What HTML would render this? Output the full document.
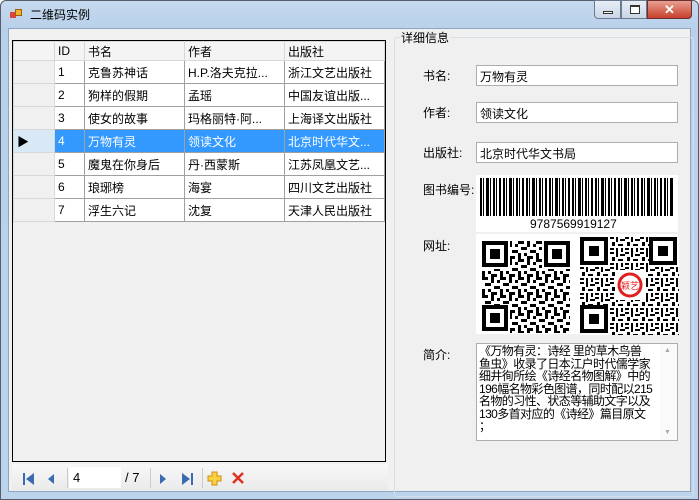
<!DOCTYPE html>
<html><head><meta charset="utf-8"><style>
*{margin:0;padding:0;box-sizing:border-box}
body{width:699px;height:500px;overflow:hidden;font-family:"Liberation Sans","Noto Sans CJK SC",sans-serif;font-size:12px;background:#fff;position:relative}
.abs{position:absolute}
.frame{left:0;top:0;width:699px;height:500px;background:linear-gradient(#c5d9ee,#b8d0ea 30px,#bcd3ec);border:1px solid #555e6a;border-radius:6px 6px 0 0}
.client{left:8px;top:28px;width:683px;height:464px;background:#f0f0f0;border:1px solid #8fa5bf}
.grid{left:12px;top:40px;width:374px;height:422px;background:#f0f0f0;border:1px solid #000}
table{border-collapse:collapse;position:absolute;left:0;top:0;font-size:12px}
td{border:1px solid #a0a0a0;height:23px;padding:0 0 0 3px;background:#fff;white-space:nowrap;overflow:hidden}
tr.h td{background:#f4f4f4;border-color:#d8d8d8;height:19px}
td.rh{background:#f0f0f0;border-color:#d8d8d8;width:41px}
tr.sel td{background:#3399ff;color:#fff}
tr.sel td.rh{background:#d8e8f6;color:#000}
.lbl{font-size:12px}
.tb{background:#fff;border:1px solid #abadb3;height:21px;padding:2px 3px;font-size:12px;width:202px;left:476px}
</style></head><body>
<div class="abs frame"></div>
<div class="abs" style="left:10px;top:8px;width:12px;height:12px">
<div class="abs" style="left:0;top:4px;width:6px;height:6px;background:#d44"></div>
<div class="abs" style="left:5px;top:1px;width:7px;height:7px;background:#f0b030;border:1px solid #a06000"></div></div>
<div class="abs" style="left:30px;top:6px;font-size:12px">二维码实例</div>
<div class="abs" style="left:594px;top:0;width:27px;height:19px;border:1px solid #6a7a90;border-radius:0 0 0 4px;background:linear-gradient(#e8eef6,#c9d6e6)"><div class="abs" style="left:8px;top:10px;width:10px;height:3px;border:1px solid #333;background:#fff"></div></div>
<div class="abs" style="left:621px;top:0;width:26px;height:19px;border:1px solid #6a7a90;background:linear-gradient(#e8eef6,#c9d6e6)"><div class="abs" style="left:8px;top:4px;width:10px;height:9px;border:1px solid #333;border-top-width:2px;background:#fff"></div></div>
<div class="abs" style="left:647px;top:0;width:45px;height:19px;border:1px solid #6a3030;border-radius:0 0 4px 0;background:linear-gradient(#e8a090,#c8402c);color:#fff;font-weight:bold;text-align:center;font-size:13px;line-height:18px">✕</div>
<div class="abs client"></div>
<div class="abs grid">
<table>
<tr class="h"><td class="rh"></td><td style="width:30px">ID</td><td style="width:100px">书名</td><td style="width:100px">作者</td><td style="width:100px">出版社</td></tr>
<tr><td class="rh"></td><td>1</td><td>克鲁苏神话</td><td>H.P.洛夫克拉...</td><td>浙江文艺出版社</td></tr>
<tr><td class="rh"></td><td>2</td><td>狗样的假期</td><td>孟瑶</td><td>中国友谊出版...</td></tr>
<tr><td class="rh"></td><td>3</td><td>使女的故事</td><td>玛格丽特·阿...</td><td>上海译文出版社</td></tr>
<tr class="sel"><td class="rh">▶</td><td>4</td><td>万物有灵</td><td>领读文化</td><td>北京时代华文...</td></tr>
<tr><td class="rh"></td><td>5</td><td>魔鬼在你身后</td><td>丹·西蒙斯</td><td>江苏凤凰文艺...</td></tr>
<tr><td class="rh"></td><td>6</td><td>琅琊榜</td><td>海宴</td><td>四川文艺出版社</td></tr>
<tr><td class="rh"></td><td>7</td><td>浮生六记</td><td>沈复</td><td>天津人民出版社</td></tr>
</table></div>
<div class="abs" style="left:12px;top:464px;width:376px;height:26px;background:linear-gradient(#f8f8f8,#eaeaea)"></div>
<svg class="abs" style="left:22px;top:472px" width="14" height="14"><rect x="1" y="1" width="2" height="12" fill="#3a6ab0"/><path d="M12 1 L4 7 L12 13Z" fill="#3a6ab0"/></svg>
<svg class="abs" style="left:46px;top:472px" width="10" height="14"><path d="M8 2 L2 7 L8 12Z" fill="#3a6ab0"/></svg>
<div class="abs" style="left:67px;top:468px;width:1px;height:20px;background:#ccc"></div>
<div class="abs" style="left:69px;top:467px;width:52px;height:21px;background:#fff;font-size:13px;padding:3px 4px">4</div>
<div class="abs" style="left:125px;top:470px;font-size:13px">/ 7</div>
<div class="abs" style="left:150px;top:468px;width:1px;height:20px;background:#ccc"></div>
<svg class="abs" style="left:158px;top:472px" width="10" height="14"><path d="M2 2 L8 7 L2 12Z" fill="#3a6ab0"/></svg>
<svg class="abs" style="left:180px;top:472px" width="14" height="14"><path d="M2 1 L10 7 L2 13Z" fill="#3a6ab0"/><rect x="11" y="1" width="2" height="12" fill="#3a6ab0"/></svg>
<div class="abs" style="left:202px;top:468px;width:1px;height:20px;background:#ccc"></div>
<svg class="abs" style="left:207px;top:471px" width="15" height="15"><path d="M5 1h5v4h4v5h-4v4h-5v-4h-4v-5h4z" fill="#f8d040" stroke="#d09010"/></svg>
<svg class="abs" style="left:231px;top:471px" width="14" height="14"><path d="M2 2L12 12M12 2L2 12" stroke="#e03020" stroke-width="2.5"/></svg>
<!-- group box -->
<div class="abs" style="left:394px;top:37px;width:300px;height:460px;border:1px solid #d5dfe5;border-radius:3px"></div>
<div class="abs" style="left:400px;top:29px;background:#f0f0f0;padding:0 1px">详细信息</div>
<div class="abs lbl" style="left:423px;top:67px">书名:</div>
<div class="abs tb" style="top:65px">万物有灵</div>
<div class="abs lbl" style="left:423px;top:104px">作者:</div>
<div class="abs tb" style="top:102px">领读文化</div>
<div class="abs lbl" style="left:423px;top:144px">出版社:</div>
<div class="abs tb" style="top:142px">北京时代华文书局</div>
<div class="abs lbl" style="left:423px;top:181px">图书编号:</div>
<div class="abs" style="left:476px;top:175px;width:202px;height:57px;background:#fff"></div>
<svg class="abs" style="left:480px;top:178px" width="196" height="38">
<defs><pattern id="bc" width="23" height="38" patternUnits="userSpaceOnUse">
<rect x="0" width="2" height="38"/><rect x="3" width="1" height="38"/><rect x="6" width="3" height="38"/><rect x="10" width="1" height="38"/><rect x="13" width="2" height="38"/><rect x="16" width="1" height="38"/><rect x="19" width="2" height="38"/></pattern></defs>
<rect width="193" height="38" fill="url(#bc)"/></svg>
<div class="abs" style="left:530px;top:217px;font-size:12px">9787569919127</div>
<div class="abs lbl" style="left:423px;top:237px">网址:</div>
<div class="abs" style="left:476px;top:234px;width:202px;height:100px;background:#fff"></div>
<svg class="abs" style="left:482px;top:241px" width="88" height="92">
<defs><pattern id="q1" width="18" height="18" patternUnits="userSpaceOnUse">
<rect x="0" y="0" width="6" height="3"/><rect x="9" y="0" width="3" height="6"/><rect x="3" y="6" width="6" height="3"/><rect x="12" y="9" width="6" height="3"/><rect x="0" y="12" width="3" height="6"/><rect x="6" y="12" width="3" height="3"/><rect x="15" y="3" width="3" height="3"/><rect x="9" y="15" width="6" height="3"/></pattern></defs>
<rect width="88" height="92" fill="url(#q1)"/>
<g fill="#fff"><rect width="28" height="28"/><rect x="60" width="28" height="28"/><rect y="64" width="28" height="28"/></g>
<g fill="none" stroke="#000" stroke-width="4"><rect x="2" y="2" width="22" height="22"/><rect x="64" y="2" width="22" height="22"/><rect x="2" y="66" width="22" height="22"/></g>
<rect x="8" y="8" width="10" height="10"/><rect x="70" y="8" width="10" height="10"/><rect x="8" y="72" width="10" height="10"/></svg>
<svg class="abs" style="left:580px;top:237px" width="99" height="98">
<defs><pattern id="q2" width="15" height="15" patternUnits="userSpaceOnUse">
<rect x="0" y="0" width="4" height="2"/><rect x="6" y="0" width="2" height="5"/><rect x="10" y="2" width="5" height="2"/><rect x="2" y="5" width="3" height="4"/><rect x="8" y="7" width="5" height="2"/><rect x="0" y="11" width="4" height="2"/><rect x="6" y="11" width="2" height="4"/><rect x="11" y="11" width="2" height="4"/></pattern></defs>
<rect width="99" height="98" fill="url(#q2)"/>
<g fill="#fff"><rect width="30" height="30"/><rect x="69" width="30" height="30"/><rect y="68" width="30" height="30"/></g>
<g fill="none" stroke="#000" stroke-width="4"><rect x="2" y="2" width="24" height="24"/><rect x="71" y="2" width="24" height="24"/><rect x="2" y="70" width="24" height="24"/></g>
<rect x="9" y="9" width="10" height="10"/><rect x="78" y="9" width="10" height="10"/><rect x="9" y="77" width="10" height="10"/>
<rect x="35" y="33" width="30" height="30" fill="#fff"/>
<circle cx="50" cy="48" r="11" fill="none" stroke="#e02020" stroke-width="3"/>
<text x="50" y="52" font-size="9" fill="#e02020" text-anchor="middle" font-family="Noto Sans CJK SC,sans-serif">颖艺</text></svg>
<div class="abs lbl" style="left:423px;top:346px">简介:</div>
<div class="abs" style="left:476px;top:343px;width:202px;height:98px;background:#fff;border:1px solid #abadb3"></div>
<div class="abs" style="left:479px;top:345px;width:185px;font-size:12px;line-height:12.5px;letter-spacing:-0.6px;white-space:nowrap">《万物有灵：诗经 里的草木鸟兽<br>鱼虫》收录了日本江户时代儒学家<br>细井徇所绘《诗经名物图解》中的<br>196幅名物彩色图谱，同时配以215<br>名物的习性、状态等辅助文字以及<br>130多首对应的《诗经》篇目原文<br>；</div>
<div class="abs" style="left:660px;top:344px;width:17px;height:96px;background:#fafafa"></div>
<div class="abs" style="left:664px;top:347px;font-size:7px;color:#aaa">▲</div>
<div class="abs" style="left:664px;top:429px;font-size:7px;color:#aaa">▼</div>
</body></html>
